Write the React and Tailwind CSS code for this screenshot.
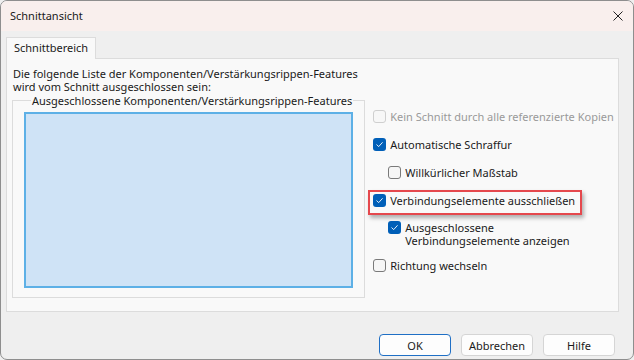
import React from "react";

const font = { fontFamily: '"Noto Sans", "Segoe UI", sans-serif' };

function CheckBox({ checked, disabled }) {
  if (checked) {
    return (
      <span className="w-[13px] h-[13px] rounded-[3px] bg-[#005fb8] flex items-center justify-center shrink-0">
        <svg width="9" height="9" viewBox="0 0 9 9" fill="none">
          <path d="M1.8 4.8 L3.7 6.6 L7.3 2.6" stroke="white" strokeWidth="0.9" strokeLinecap="round" strokeLinejoin="round" />
        </svg>
      </span>
    );
  }
  return (
    <span
      className={`w-[13px] h-[13px] rounded-[3px] border shrink-0 ${
        disabled ? "border-[#cfcfcf] bg-[#f7f7f7]" : "border-[#7a7a7a] bg-[#f6f6f6]"
      }`}
    />
  );
}

function Option({ checked, disabled, children, className = "" }) {
  return (
    <div className={`flex items-start gap-[4px] leading-[13px] whitespace-nowrap ${className}`}>
      <CheckBox checked={checked} disabled={disabled} />
      <span className={disabled ? "text-[#9a9a9a]" : "text-[#1a1a1a]"}>{children}</span>
    </div>
  );
}

function Button({ children, focused }) {
  return (
    <button
      className={`w-[72px] h-[22px] rounded-[4px] bg-[#fdfdfd] text-[11px] text-[#1a1a1a] leading-none ${
        focused ? "border border-[#1f6fc5]" : "border border-[#d5d5d5]"
      }`}
    >
      {children}
    </button>
  );
}

export default function App() {
  return (
    <div className="w-[634px] h-[360px] bg-[#efefef]" style={font}>
      <div className="h-full flex flex-col rounded-[7px] border border-[#8e8e8e] overflow-hidden bg-[#efefef] text-[11px]">
        <div className="h-[30px] bg-[#f9efed] flex items-center justify-between pl-[9px] pr-[10px] shrink-0">
          <span className="text-[11px] text-[#1a1a1a]">Schnittansicht</span>
          <svg width="10" height="10" viewBox="0 0 10 10">
            <path d="M0.5 0.5 L9.5 9.5 M9.5 0.5 L0.5 9.5" stroke="#222" strokeWidth="1" />
          </svg>
        </div>

        <div className="pl-[5px] pr-[14px] pt-[5px]">
          <div className="flex">
            <div className="h-[22px] w-[90px] border border-b-0 border-[#dcdcdc] bg-[#f9f9f9] pl-[7px] flex items-center text-[#1a1a1a] relative top-[1px]">
              Schnittbereich
            </div>
          </div>
          <div className="h-[254px] border border-[#dcdcdc] bg-[#f9f9f9] pl-[6px] pt-[8px] flex flex-col">
            <p className="leading-[13px] text-[#1a1a1a]">
              Die folgende Liste der Komponenten/Verstärkungsrippen-Features
              <br />
              wird vom Schnitt ausgeschlossen sein:
            </p>
            <div className="flex">
              <fieldset className="w-[353px] h-[204px] shrink-0 border border-[#dcdcdc] px-[11px] pb-[8px] mt-[1px] ml-[-1px]">
                <legend className="ml-[7px] px-[1px] leading-[13px] text-[#1a1a1a] whitespace-nowrap">
                  Ausgeschlossene Komponenten/Verstärkungsrippen-Features
                </legend>
                <div className="h-[176px] mt-[5px] border-2 border-[#5db0e6] bg-[#cfe3f6]" />
              </fieldset>

              <div className="ml-[8px] mt-[17px] flex flex-col">
                <Option disabled>Kein Schnitt durch alle referenzierte Kopien</Option>
                <Option checked className="mt-[15px]">Automatische Schraffur</Option>
                <Option className="mt-[15px] ml-[15px]">Willkürlicher Maßstab</Option>
                <div className="relative mt-[15px]">
                  <div className="absolute left-[-5px] top-[-4px] w-[214px] h-[25px] border-2 border-[#e5484d] shadow-[2px_3px_4px_rgba(0,0,0,0.3)]" />
                  <Option checked>Verbindungselemente ausschließen</Option>
                </div>
                <Option checked className="mt-[14px] ml-[15px]">
                  Ausgeschlossene
                  <br />
                  Verbindungselemente anzeigen
                </Option>
                <Option className="mt-[12px]">Richtung wechseln</Option>
              </div>
            </div>
          </div>
        </div>

        <div className="flex-1 flex items-end justify-end gap-[10px] pr-[18px] pb-[3px]">
          <Button focused>OK</Button>
          <Button>Abbrechen</Button>
          <Button>Hilfe</Button>
        </div>
      </div>
    </div>
  );
}
